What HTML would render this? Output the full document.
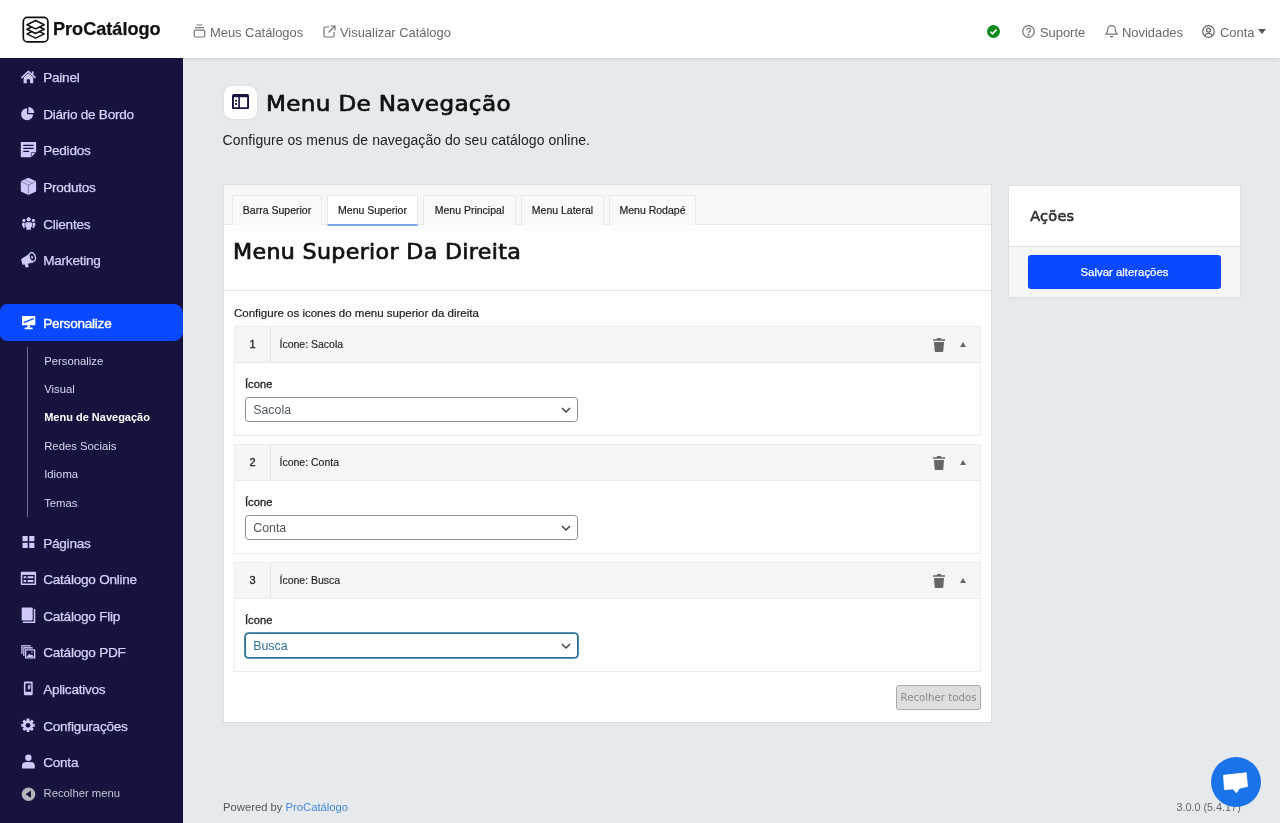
<!DOCTYPE html>
<html lang="pt-BR">
<head>
<meta charset="utf-8">
<title>Menu De Navegação - ProCatálogo</title>
<style>
*{box-sizing:border-box;margin:0;padding:0}
html,body{width:1280px;height:823px;overflow:hidden}
body{background:#e6eaed;font-family:"Liberation Sans",sans-serif;color:#222;position:relative;will-change:transform}
.abs{position:absolute;white-space:nowrap}
/* header */
#hdr{position:absolute;left:0;top:0;width:1280px;height:58px;background:#fefefe;box-shadow:0 1px 5px rgba(0,0,0,.11);z-index:5}
#logo-t{left:53px;top:17px;font-size:18.100px;font-weight:bold;color:#111;line-height:24px;-webkit-text-stroke:.25px #111}
.tn{font-size:12.900px;color:#6a6a6a;line-height:20px;top:22.500px}
/* sidebar */
#side{position:absolute;left:0;top:58px;width:183px;height:765px;background:#17133f;z-index:2}
.mi{position:absolute;left:43.200px;font-size:13.600px;letter-spacing:-.25px;color:#d6d3fb;line-height:20px;white-space:nowrap;-webkit-text-stroke:.25px #d6d3fb}
.ic{position:absolute;left:20px;width:16px;height:16px;fill:#c9c4fb}
.si{position:absolute;left:44.200px;font-size:11.300px;color:#d8d6f0;line-height:16px;white-space:nowrap}
#act{position:absolute;left:0;top:246px;width:183px;height:37px;background:#0a49ff;border-radius:7px 9px 9px 7px}
/* main */
#ibox{left:223.700px;top:85.600px;width:33.600px;height:33.600px;background:#fefefe;border-radius:8.500px;box-shadow:0 0 3px rgba(0,0,0,.08)}
#h1{left:266.400px;top:85.600px;font-family:"DejaVu Sans","Liberation Sans",sans-serif;font-size:21px;line-height:36px;color:#111;letter-spacing:.3px;-webkit-text-stroke:.7px #111;transform-origin:0 50%;transform:scaleX(1.1)}
#sub{left:222.500px;top:131px;font-size:14px;line-height:18px;color:#222;letter-spacing:.045px}
#card{position:absolute;left:223px;top:184px;width:769px;height:539px;background:#fdfdfd;border:1px solid #dcdfe2}
#tabs{position:absolute;left:0;top:0;width:767px;height:40px;background:#f7f7f7;border-bottom:1px solid #e8e8e8}
.tab{position:absolute;top:10px;height:30px;background:#f9f9f9;border:1px solid #e9e9e9;border-bottom:none;font-size:10.500px;line-height:28px;-webkit-text-stroke:.2px #222;text-align:center;color:#222;white-space:nowrap}
.tab.on{background:#fff;border-bottom:2px solid #7fa8dc;height:31px}
#h2{left:8.600px;top:49.200px;font-family:"DejaVu Sans","Liberation Sans",sans-serif;font-size:21px;line-height:36px;color:#111;letter-spacing:.3px;-webkit-text-stroke:.7px #111;transform-origin:0 50%;transform:scaleX(1.056)}
#hr{position:absolute;left:0;top:105px;width:767px;height:1px;background:#e4e4e4}
#desc{left:10px;top:119.500px;font-size:11.500px;line-height:16px;color:#222;-webkit-text-stroke:.2px #222}
.row{position:absolute;left:10px;width:747px;height:110px;border:1px solid #ededed;background:#fefefe}
.rh{position:absolute;left:0;top:0;width:745px;height:36px;background:#f6f6f6;border-bottom:1px solid #e9e9e9}
.num{position:absolute;left:0;top:0;width:36px;height:35px;border-right:1px solid #e4e4e4;font-size:11px;line-height:35px;text-align:center;color:#222;-webkit-text-stroke:.3px #222}
.rt{position:absolute;left:44.500px;top:0;font-size:10.500px;line-height:35px;color:#222;white-space:nowrap;-webkit-text-stroke:.15px #222}
.lbl{position:absolute;left:10px;top:48.500px;font-size:11.200px;line-height:16px;color:#222;-webkit-text-stroke:.3px #222}
.sel{position:absolute;left:10px;top:70px;width:333px;height:24.500px;border:1px solid #8c8f94;border-radius:3.500px;background:#fff;font-size:12.400px;line-height:24px;padding-left:7.200px;color:#50575e}
.sel.f{border:1px solid #2a6f95;box-shadow:0 0 0 .8px #2a6f95;color:#2f7298}
.chev{position:absolute;right:6px;top:8px;width:10px;height:8px}
.trash{position:absolute;left:698px;top:11px;width:12px;height:14px;fill:#666}
.car{position:absolute;left:725px;top:15px;width:0;height:0;border-left:3.500px solid transparent;border-right:3.500px solid transparent;border-bottom:5px solid #666}
#btnc{position:absolute;left:672px;top:499.500px;width:85px;height:25px;border:1px solid #aaa;border-radius:3px;background:#dedede;font-family:"DejaVu Sans","Liberation Sans",sans-serif;font-size:10.200px;line-height:23px;text-align:center;color:#8a8a8a;white-space:nowrap}
#acard{position:absolute;left:1008px;top:185px;width:233px;height:113px;background:#fff;border:1px solid #dcdfe2}
#acf{position:absolute;left:0;top:60px;width:231px;height:51px;background:#f6f6f6;border-top:1px solid #e1e1e1}
#save{position:absolute;left:19px;top:8px;width:193px;height:33.500px;background:#0a49ff;border-radius:3px;color:#fff;font-size:11.400px;line-height:35px;text-align:center;-webkit-text-stroke:.25px #fff}
#ah{left:21.200px;top:19.700px;font-family:"DejaVu Sans","Liberation Sans",sans-serif;font-size:14.500px;line-height:20px;color:#333;-webkit-text-stroke:.6px #333;letter-spacing:.25px}
.ft{font-size:11.250px;line-height:14px;color:#555;top:800px}
#chat{position:absolute;left:1211px;top:757px;width:50px;height:50px;border-radius:50%;background:#1a73e8;z-index:6}
</style>
</head>
<body>
<div id="hdr">
  <svg class="abs" style="left:22px;top:15.500px" width="27" height="27" viewBox="0 0 27 27"><rect x="1.300" y="1.300" width="24.600" height="24.600" rx="4.200" fill="#fff" stroke="#111" stroke-width="1.700"/><g fill="#fff" stroke="#111" stroke-width="1.600" stroke-linejoin="round"><path d="M13.600 13.700l8.600 4.200-8.600 4.200-8.600-4.200z"/><path d="M13.600 9.100l8.600 4.200-8.600 4.200-8.600-4.200z"/><path d="M13.600 4.500l8.600 4.200-8.600 4.200-8.600-4.200z"/></g></svg>
  <span class="abs" id="logo-t">ProCatálogo</span>
  <svg class="abs" style="left:193px;top:24px" width="13" height="14" viewBox="0 0 13 14" fill="none" stroke="#777" stroke-width="1.2"><path d="M3.5 1h6M2.2 3.6h8.6"/><rect x="1.2" y="6.2" width="10.6" height="6.8" rx="1.2"/></svg>
  <span class="abs tn" style="left:210px">Meus Catálogos</span>
  <svg class="abs" style="left:323px;top:25px" width="13" height="13" viewBox="0 0 13 13" fill="none" stroke="#777" stroke-width="1.2"><path d="M6 2H2.2A1.2 1.2 0 0 0 1 3.200V10.800A1.200 1.200 0 0 0 2.200 12H9.800A1.200 1.200 0 0 0 11 10.800V7"/><path d="M7.500 1H12V5.500M12 1L5.500 7.500"/></svg>
  <span class="abs tn" style="left:340px">Visualizar Catálogo</span>
  <svg class="abs" style="left:987px;top:25px" width="13" height="13" viewBox="0 0 13 13"><circle cx="6.5" cy="6.5" r="6.5" fill="#0f8a1f"/><path d="M3.500 6.700l2.100 2.100 3.900-4.200" fill="none" stroke="#fff" stroke-width="1.600"/></svg>
  <svg class="abs" style="left:1022px;top:25px" width="13" height="13" viewBox="0 0 13 13" fill="none" stroke="#777" stroke-width="1.250"><circle cx="6.500" cy="6.500" r="5.800"/><path d="M4.700 5.200a1.900 1.900 0 1 1 2.600 1.700c-.5.300-.8.600-.8 1.200"/><circle cx="6.500" cy="9.800" r=".4" fill="#777"/></svg>
  <span class="abs tn" style="left:1040px">Suporte</span>
  <svg class="abs" style="left:1104.700px;top:24.300px" width="13" height="14" viewBox="0 0 13 14" fill="none" stroke="#777" stroke-width="1.250"><path d="M6.500 1.500a3.800 3.800 0 0 0-3.800 3.800c0 2.800-1.200 4.200-1.700 4.700h11c-.5-.5-1.700-1.900-1.700-4.700a3.800 3.800 0 0 0-3.800-3.800z"/><path d="M5.200 12a1.400 1.400 0 0 0 2.600 0"/></svg>
  <span class="abs tn" style="left:1122px">Novidades</span>
  <svg class="abs" style="left:1202px;top:25px" width="13" height="13" viewBox="0 0 13 13" fill="none" stroke="#666" stroke-width="1.250"><circle cx="6.500" cy="6.500" r="5.800"/><circle cx="6.500" cy="5" r="2"/><path d="M2.600 10.600c.8-1.500 2.200-2.200 3.900-2.200s3.100.7 3.900 2.200"/></svg>
  <span class="abs tn" style="left:1220px">Conta</span>
  <span class="abs" style="left:1258px;top:29px;width:0;height:0;border-left:4px solid transparent;border-right:4px solid transparent;border-top:5px solid #555"></span>
</div>

<div id="side">
  <div id="act"></div>
  <svg style="position:absolute;left:0;top:0" width="183" height="765" viewBox="0 0 183 765" fill="#cec8fb">
    <g><path d="M21.700 19.600L28.400 13.400 35.100 19.600" fill="none" stroke="#cec8fb" stroke-width="1.500" stroke-linecap="round" stroke-linejoin="round"/><rect x="31.800" y="13.400" width="1.700" height="3.400"/><path d="M23.600 19.600L28.400 15.300 33.200 19.600V25.300H30V21.200H26.800V25.300H23.600Z"/></g>
    <g><path d="M27.100 50.300A6 6 0 1 0 33.100 56.300H27.100Z"/><path d="M28.400 49.100A6 6 0 0 1 34.300 55H28.400Z"/></g>
    <g><path d="M20.800 84H36.100V94.200L31 99.300H20.800Z"/><path d="M31.300 99V94.500H35.800" fill="none" stroke="#17133f" stroke-width=".9" opacity=".7"/><path d="M23.300 87.400H33.600M23.300 90.400H33.600M23.300 93.400H29" stroke="#17133f" stroke-width="1.300"/></g>
    <g><path d="M28.450 119.700L36.100 123.300V133.400L28.450 137.100 20.800 133.400V123.300Z"/><path d="M21.200 123.600L28.450 127.100 35.700 123.600M28.450 127.100V136.600" fill="none" stroke="#17133f" stroke-width=".9" opacity=".45"/><path d="M24.600 121.700L32.200 125.400" stroke="#17133f" stroke-width=".8" opacity=".35"/></g>
    <g><circle cx="28.650" cy="161.300" r="2.100"/><circle cx="23.900" cy="162.400" r="1.600"/><circle cx="33.400" cy="162.400" r="1.600"/><path d="M26.600 164.200H30.700A1.300 1.300 0 0 1 32 165.500V168.600L30.900 169.600V171.700H26.400V169.600L25.300 168.600V165.500A1.300 1.300 0 0 1 26.600 164.200Z"/><path d="M22.600 164.700H24.700V170H23.100V168.600L22 167.900V165.300Z M34.700 164.700H32.600V170H34.200V168.600L35.300 167.900V165.300Z"/></g>
    <g><path d="M21.300 202.200A1.300 1.300 0 0 1 22 200.600L30.200 195.300L33.200 204.400L23.800 206.800A1.300 1.300 0 0 1 22.300 206Z"/><path d="M24.600 206.200L27.800 205.400 28.900 209 25.700 209.400Z"/><ellipse cx="32.300" cy="199" rx="3" ry="4.600" transform="rotate(-17 32.300 199)" fill="#17133f" stroke="#cec8fb" stroke-width="1.400"/><ellipse cx="32.100" cy="199.200" rx=".9" ry="1.500" transform="rotate(-17 32.100 199.200)"/></g>
    <g fill="#fff"><rect x="22" y="258" width="13.300" height="9.300" rx=".6"/><path d="M23.600 264.600L33.700 260.600" stroke="#0a49ff" stroke-width="1.300"/><rect x="27.300" y="267.300" width="2.700" height="2.400"/><rect x="24.600" y="269.600" width="8.100" height="1.700" rx=".4"/></g>
    <g><rect x="22.500" y="478" width="5.200" height="5.200"/><rect x="29.200" y="478" width="5.200" height="5.200"/><rect x="22.500" y="484.800" width="5.200" height="5.200"/><rect x="29.200" y="484.800" width="5.200" height="5.200"/></g>
    <g><rect x="20.800" y="513.800" width="15.300" height="13.200" rx="1"/><rect x="22.300" y="516.900" width="12.300" height="8.600" fill="#17133f"/><rect x="23.600" y="518.200" width="2.600" height="2.100"/><rect x="23.600" y="522" width="2.600" height="2.100"/><rect x="27.500" y="518.200" width="5.900" height="2.100"/><rect x="27.500" y="522" width="5.900" height="2.100"/></g>
    <g><rect x="21.700" y="549.500" width="11" height="12.900" rx="1"/><path d="M33.800 551H35.300V564.900H23V563.400H33.800Z"/></g>
    <g><rect x="21.100" y="587" width="9.600" height="9" rx=".6" opacity=".8"/><rect x="22.700" y="588.600" width="12" height="12" fill="#17133f"/><rect x="23.100" y="589" width="9.600" height="9" rx=".6" opacity=".9"/><rect x="24.500" y="590.600" width="12" height="12" fill="#17133f"/><rect x="25" y="591.200" width="10.300" height="9.400" rx=".6"/><rect x="26.300" y="592.500" width="7.700" height="6.800" fill="#17133f"/><path d="M26.600 599L29.200 595.700 30.800 597.300 32 596.300 33.800 599Z"/><circle cx="32" cy="594.200" r=".8"/></g>
    <g><rect x="23.900" y="623.600" width="8.800" height="13.600" rx="1.200"/><rect x="25.400" y="625.400" width="5.800" height="8.400" fill="#17133f"/><path d="M27.800 627.800L30.400 626.200V630.600L27.800 631.800Z" opacity=".9"/></g>
    <g><path d="M26.57 662.52 L26.68 660.54 L29.42 660.54 L29.53 662.52 L30.38 662.88 L31.86 661.55 L33.80 663.49 L32.47 664.97 L32.83 665.82 L34.81 665.93 L34.81 668.67 L32.83 668.78 L32.47 669.63 L33.80 671.11 L31.86 673.05 L30.38 671.72 L29.53 672.08 L29.42 674.06 L26.68 674.06 L26.57 672.08 L25.72 671.72 L24.24 673.05 L22.30 671.11 L23.63 669.63 L23.27 668.78 L21.29 668.67 L21.29 665.93 L23.27 665.82 L23.63 664.97 L22.30 663.49 L24.24 661.55 L25.72 662.88Z"/><circle cx="28.05" cy="667.3" r="2.400" fill="#17133f"/></g>
    <g><circle cx="28.400" cy="699.800" r="3.200"/><path d="M22 710.400V708A4 4 0 0 1 26 704H30.800A4 4 0 0 1 34.800 708V710.400Z"/></g>
    <g><circle cx="28.500" cy="736.200" r="6.800" fill="#b4b4bc"/><path d="M31 732.600V739.800L25.600 736.200Z" fill="#17133f"/></g>
  </svg>
  <span class="mi" style="top:10px">Painel</span>
  <span class="mi" style="top:47px">Diário de Bordo</span>
  <span class="mi" style="top:83px">Pedidos</span>
  <span class="mi" style="top:120px">Produtos</span>
  <span class="mi" style="top:157px">Clientes</span>
  <span class="mi" style="top:193px">Marketing</span>
  <span class="mi" style="top:256px;color:#fff;-webkit-text-stroke:.38px #fff">Personalize</span>
  <div style="position:absolute;left:27px;top:289px;width:1px;height:170px;background:#6f6c8f"></div>
  <span class="si" style="top:294.700px;">Personalize</span>
  <span class="si" style="top:322.700px;">Visual</span>
  <span class="si" style="top:350.700px;color:#fff;font-weight:bold;font-size:11px">Menu de Navegação</span>
  <span class="si" style="top:379.700px;">Redes Sociais</span>
  <span class="si" style="top:407.700px;">Idioma</span>
  <span class="si" style="top:436.700px;">Temas</span>
  <span class="mi" style="top:476px">Páginas</span>
  <span class="mi" style="top:512px">Catálogo Online</span>
  <span class="mi" style="top:549px">Catálogo Flip</span>
  <span class="mi" style="top:585px">Catálogo PDF</span>
  <span class="mi" style="top:622px">Aplicativos</span>
  <span class="mi" style="top:659px">Configurações</span>
  <span class="mi" style="top:695px">Conta</span>
  <span class="si" style="top:726.800px;left:43.500px;color:#c5c4d2">Recolher menu</span>
</div>

<div class="abs" id="ibox"><svg style="position:absolute;left:8.300px;top:8.300px" width="17" height="15.200" viewBox="0 0 17 15.200"><rect x="0" y="0" width="17" height="15.200" rx="1.800" fill="#17133f"/><rect x="1.900" y="3.200" width="4.400" height="10.100" fill="#fff"/><rect x="7.900" y="3.200" width="7.200" height="10.100" fill="#fff"/><rect x="3.100" y="5.900" width="1.900" height="1.700" fill="#17133f"/><rect x="3.100" y="9.100" width="1.900" height="1.800" fill="#17133f"/></svg></div>
<span class="abs" id="h1">Menu De Navegação</span>
<span class="abs" id="sub">Configure os menus de navegação do seu catálogo online.</span>

<div id="card">
  <div id="tabs">
    <div class="tab" style="left:8px;width:90px">Barra Superior</div>
    <div class="tab on" style="left:103px;width:91px">Menu Superior</div>
    <div class="tab" style="left:199px;width:93px">Menu Principal</div>
    <div class="tab" style="left:297px;width:83px">Menu Lateral</div>
    <div class="tab" style="left:385px;width:87px">Menu Rodapé</div>
  </div>
  <span class="abs" id="h2">Menu Superior Da Direita</span>
  <div id="hr"></div>
  <span class="abs" id="desc">Configure os icones do menu superior da direita</span>

  <div class="row" style="top:141px">
    <div class="rh"><div class="num">1</div><span class="rt">Ícone: Sacola</span>
      <svg class="trash" viewBox="0 0 12 14"><path d="M4.200 0h3.600l.5 1.200H12v1.600H0V1.200h3.700zM1 4h10l-.7 9a1 1 0 0 1-1 1H2.700a1 1 0 0 1-1-1z"/></svg><span class="car"></span></div>
    <span class="lbl">Ícone</span>
    <div class="sel">Sacola<svg class="chev" viewBox="0 0 10 8"><path d="M1 2l4 4 4-4" fill="none" stroke="#444" stroke-width="1.500"/></svg></div>
  </div>
  <div class="row" style="top:259px">
    <div class="rh"><div class="num">2</div><span class="rt">Ícone: Conta</span>
      <svg class="trash" viewBox="0 0 12 14"><path d="M4.200 0h3.600l.5 1.200H12v1.600H0V1.200h3.700zM1 4h10l-.7 9a1 1 0 0 1-1 1H2.700a1 1 0 0 1-1-1z"/></svg><span class="car"></span></div>
    <span class="lbl">Ícone</span>
    <div class="sel">Conta<svg class="chev" viewBox="0 0 10 8"><path d="M1 2l4 4 4-4" fill="none" stroke="#444" stroke-width="1.500"/></svg></div>
  </div>
  <div class="row" style="top:377px">
    <div class="rh"><div class="num">3</div><span class="rt">Ícone: Busca</span>
      <svg class="trash" viewBox="0 0 12 14"><path d="M4.200 0h3.600l.5 1.200H12v1.600H0V1.200h3.700zM1 4h10l-.7 9a1 1 0 0 1-1 1H2.700a1 1 0 0 1-1-1z"/></svg><span class="car"></span></div>
    <span class="lbl">Ícone</span>
    <div class="sel f">Busca<svg class="chev" viewBox="0 0 10 8"><path d="M1 2l4 4 4-4" fill="none" stroke="#444" stroke-width="1.500"/></svg></div>
  </div>
  <div id="btnc">Recolher todos</div>
</div>

<div id="acard">
  <span class="abs" id="ah">Ações</span>
  <div id="acf"><div id="save">Salvar alterações</div></div>
</div>

<span class="abs ft" style="left:223px">Powered by <span style="color:#4389d8">ProCatálogo</span></span>
<span class="abs ft" style="left:1176.500px;font-size:10.800px;color:#666">3.0.0 (5.4.17)</span>
<div id="chat"><svg style="position:absolute;left:0;top:0" width="50" height="50" viewBox="0 0 50 50"><path d="M12.500 18.300L35.200 15.800 36.500 29.400 28.600 31.200 25.400 35.900 22.100 31.900 13.500 32.600Z" fill="#fff" stroke="#fff" stroke-width=".8" stroke-linejoin="round"/></svg></div>
</body>
</html>
